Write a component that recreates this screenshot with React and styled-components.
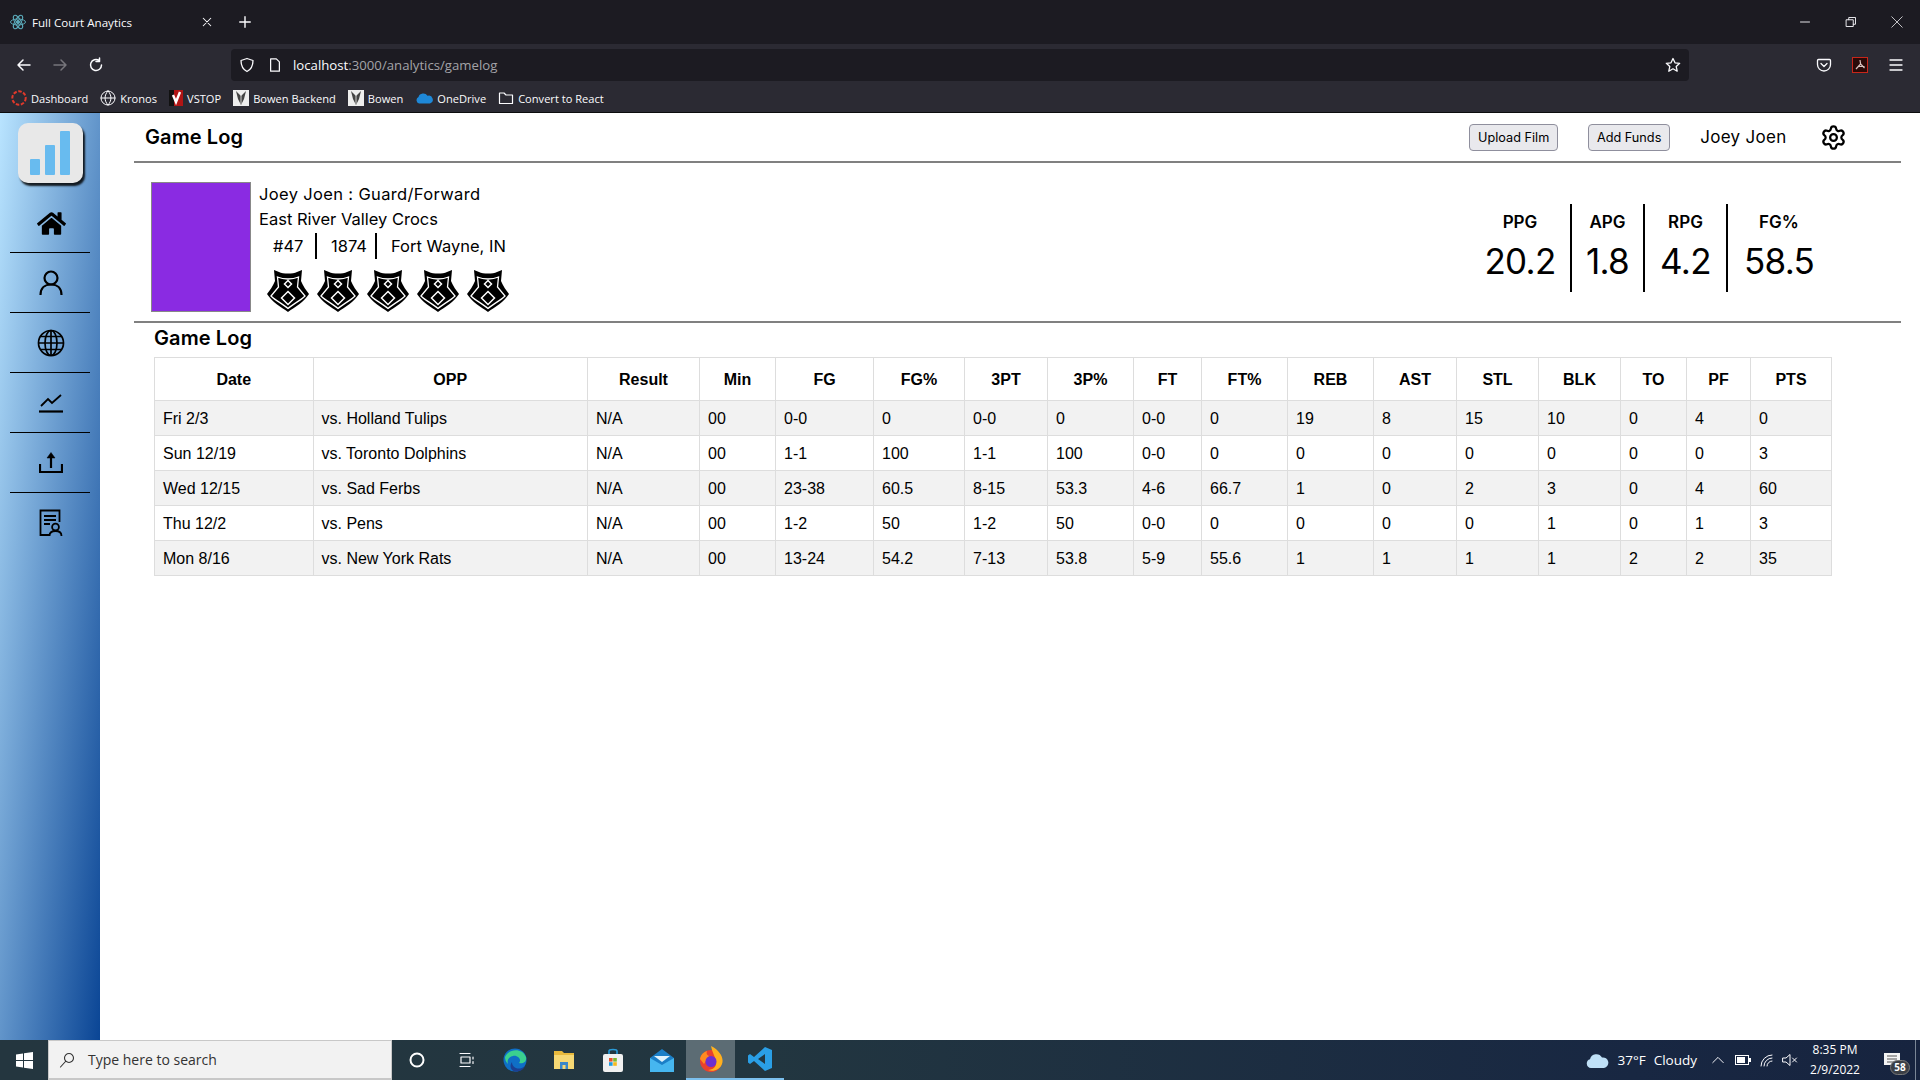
import React from "react";
import styled, { createGlobalStyle } from "styled-components";
import { FaHome } from "react-icons/fa";
import { Settings } from "lucide-react";

const GlobalStyle = createGlobalStyle`
   html, body {
      margin: 0;
      padding: 0;
      height: 100%;
      overflow: hidden;
      background: #fff;
   }
   #root {
      height: 100%;
   }
`;

const POP = `Inter, "Noto Sans", sans-serif`;
const UI = `"Open Sans", "Noto Sans", sans-serif`;

const Page = styled.div`
   width: 1920px;
   height: 1080px;
   display: flex;
   flex-direction: column;
`;

/* browser chrome */
const Chrome = styled.div`
   height: 113px;
   flex: none;
   background: #2b2a33;
   border-bottom: 1px solid #0c0c0d;
   box-sizing: border-box;
   font-family: ${UI};
   color: #fbfbfe;
`;

const TabStrip = styled.div`
   height: 44px;
   background: #1c1b22;
   display: flex;
   align-items: center;
`;

const Tab = styled.div`
   width: 226px;
   box-sizing: border-box;
   padding: 0 10px;
   display: flex;
   align-items: center;
   gap: 6px;
   font-size: 11.6px;
`;

const TabClose = styled.span`
   margin-left: auto;
   margin-right: 3px;
   display: flex;
`;

const NewTab = styled.span`
   width: 38px;
   display: flex;
   justify-content: center;
`;

const WinControls = styled.div`
   margin-left: auto;
   display: flex;
`;

const WinButton = styled.span`
   width: 46px;
   display: flex;
   justify-content: center;
`;

const ToolRow = styled.div`
   height: 42px;
   display: flex;
   align-items: center;
   padding-left: 6px;
   padding-right: 6px;
`;

const ToolSlot = styled.span`
   width: 36px;
   display: flex;
   justify-content: center;
   align-items: center;
`;

const UrlBar = styled.div`
   width: 1458px;
   height: 32px;
   margin-left: 117px;
   margin-right: 117px;
   background: #1c1b22;
   border-radius: 4px;
   display: flex;
   align-items: center;
   padding-left: 2px;
   box-sizing: border-box;
   flex: none;
   font-size: 13.2px;
   color: #a3a3a8;
`;

const UrlHost = styled.span`
   color: #fbfbfe;
`;

const UrlText = styled.span`
   margin-left: 4px;
`;

const UrlStar = styled.span`
   margin-left: auto;
   margin-right: 8px;
   display: flex;
`;

const UrlIcon = styled.span`
   width: 28px;
   display: flex;
   justify-content: center;
`;

const BookmarkRow = styled.div`
   height: 24px;
   display: flex;
   align-items: center;
   padding-left: 11px;
   gap: 12px;
   font-size: 11.1px;
`;

const Bookmark = styled.div`
   display: flex;
   align-items: center;
   gap: 4px;
`;

/* app */
const Body = styled.div`
   flex: 1;
   min-height: 0;
   display: flex;
   background: #fff;
`;

const Sidebar = styled.nav`
   width: 100px;
   flex: none;
   background: linear-gradient(to bottom right, #b9e4ff, #0a4595);
   display: flex;
   flex-direction: column;
   align-items: center;
   padding-top: 10px;
   box-sizing: border-box;
`;

const Logo = styled.div`
   width: 65px;
   height: 60px;
   background: #e8e8e8;
   border-radius: 10px;
   box-shadow: 2px 3px 2px rgba(0, 0, 0, 0.85);
   display: flex;
   align-items: flex-end;
   justify-content: center;
   gap: 5px;
   padding-bottom: 8px;
   box-sizing: border-box;
   margin-bottom: 10px;
`;

const LogoBar = styled.span`
   width: 10px;
   height: ${({ $h }) => $h}px;
   background: #68bbef;
   border-radius: 1px;
`;

const NavItem = styled.div`
   width: 80px;
   height: 60px;
   flex: none;
   box-sizing: border-box;
   display: flex;
   align-items: center;
   justify-content: center;
   padding-left: 2px;
   padding-top: ${({ $first }) => ($first ? 2 : 0)}px;
   border-bottom: ${({ $last }) => ($last ? "none" : "1px solid #000")};
   color: #000;
`;

const Main = styled.main`
   flex: 1;
   min-width: 0;
   padding: 0 19px 0 34px;
   color: #000;
   font-family: ${POP};
`;

const TopBar = styled.header`
   height: 50px;
   box-sizing: border-box;
   border-bottom: 2px solid #808080;
   display: flex;
   align-items: center;
   padding: 0 42px 0 11px;
`;

const TopTitle = styled.h1`
   margin: 0;
   font-size: 20px;
   font-weight: 600;
   letter-spacing: 0.1px;
`;

const TopButton = styled.button`
   height: 27px;
   width: ${({ $w }) => $w}px;
   margin-left: ${({ $ml }) => $ml}px;
   padding: 0;
   background: #e9e9ed;
   border: 1px solid #8f8f9d;
   border-radius: 4px;
   font-family: ${POP};
   font-size: 12.7px;
   color: #000;
`;

const UserName = styled.span`
   margin-left: 30px;
   width: 120px;
   font-size: 17px;
   letter-spacing: 0.3px;
`;

const Profile = styled.section`
   height: 160px;
   box-sizing: border-box;
   border-bottom: 2px solid #808080;
   display: flex;
   padding: 19px 71px 0 17px;
`;

const Photo = styled.div`
   width: 100px;
   height: 130px;
   box-sizing: border-box;
   background: #8a2be2;
   border: 1px solid #888;
   flex: none;
`;

const PlayerInfo = styled.div`
   margin-left: 8px;
   font-size: 16.5px;
`;

const PlayerLine = styled.div`
   height: 25px;
   line-height: 25px;
   letter-spacing: ${({ $track }) => $track || 0}px;
`;

const MetaRow = styled.div`
   display: flex;
   height: 26px;
   line-height: 26px;
   margin-top: 1px;
   padding-left: 14px;
`;

const MetaCell = styled.span`
   width: ${({ $w }) => $w}px;
   box-sizing: border-box;
   padding-left: ${({ $pad }) => $pad || 0}px;
   border-right: ${({ $line }) => ($line ? "2px solid #000" : "none")};
`;

const BadgeRow = styled.div`
   display: flex;
   gap: 8px;
   margin-top: 11px;
   padding-left: 8px;
`;

const StatRow = styled.div`
   margin-left: auto;
   margin-top: 22px;
   height: 88px;
   display: flex;
`;

const StatCell = styled.div`
   width: ${({ $w }) => $w}px;
   box-sizing: border-box;
   border-right: ${({ $line }) => ($line ? "2px solid #000" : "none")};
   text-align: center;
`;

const StatLabel = styled.div`
   margin-top: 7px;
   font-size: 17px;
   font-weight: 600;
   line-height: 22px;
`;

const StatValue = styled.div`
   margin-top: 6px;
   font-size: 35px;
   line-height: 44px;
   letter-spacing: -0.7px;
`;

const SectionTitle = styled.h2`
   margin: 0;
   padding-left: 20px;
   height: 34px;
   line-height: 30px;
   font-size: 20px;
   font-weight: 600;
   letter-spacing: 0.1px;
`;

const TableWrap = styled.div`
   padding-left: 20px;
`;

const LogTable = styled.table`
   width: 1677px;
   table-layout: fixed;
   border-collapse: collapse;
   font-family: "Liberation Sans", Arial, sans-serif;
   font-size: 16px;
`;

const Th = styled.th`
   height: 43px;
   padding: 2px 0 0;
   box-sizing: border-box;
   border: 1px solid #ddd;
   font-weight: 700;
   text-align: center;
   background: #fff;
`;

const Tr = styled.tr`
   background: ${({ $odd }) => ($odd ? "#f2f2f2" : "#fff")};
`;

const Td = styled.td`
   height: 35px;
   padding: 2px 0 0 8px;
   box-sizing: border-box;
   border: 1px solid #ddd;
   white-space: nowrap;
`;

/* taskbar */
const Taskbar = styled.footer`
   height: 40px;
   flex: none;
   display: flex;
   align-items: stretch;
   background: linear-gradient(to right, #24363f, #223640 40%, #182742 85%, #17243f);
   color: #fff;
   font-family: ${UI};
`;

const StartSlot = styled.div`
   width: 48px;
   display: flex;
   align-items: center;
   justify-content: center;
`;

const SearchBox = styled.div`
   width: 344px;
   box-sizing: border-box;
   background: #f2f2f2;
   border: 1px solid #c8c8c8;
   border-bottom-width: 2px;
   display: flex;
   align-items: center;
   gap: 13px;
   padding-left: 10px;
   color: #333;
   font-size: 14px;
`;

const TaskSlot = styled.div`
   width: 49px;
   box-sizing: border-box;
   display: flex;
   align-items: center;
   justify-content: center;
   background: ${({ $active }) => ($active ? "#5c6c74" : "transparent")};
   border-bottom: ${({ $open }) => ($open ? "2px solid #7cc0ee" : "none")};
`;

const Tray = styled.div`
   margin-left: auto;
   display: flex;
   align-items: center;
   font-size: 13.5px;
   border-right: 1px solid #7a8696;
   margin-right: 4px;
`;

const TrayIcon = styled.span`
   width: ${({ $w }) => $w}px;
   margin-left: ${({ $ml }) => $ml || 0}px;
   display: flex;
   justify-content: center;
`;

const TrayText = styled.span`
   margin-left: ${({ $ml }) => $ml}px;
`;

const Clock = styled.div`
   width: 66px;
   margin-left: 1px;
   text-align: center;
   font-size: 12px;
   line-height: 20px;
`;

const Notify = styled.div`
   position: relative;
   width: 37px;
   height: 40px;
   margin-left: 10px;
   padding: 13px 0 0 6px;
   box-sizing: border-box;
`;

const NotifyCount = styled.span`
   position: absolute;
   left: 12px;
   top: 20px;
   width: 20px;
   height: 15px;
   border-radius: 8px;
   background: #3b3f46;
   border: 1px solid #777;
   box-sizing: border-box;
   font-size: 10px;
   line-height: 13px;
   text-align: center;
   font-weight: 700;
`;

/* icons */
const ReactMark = () => (
   <svg width="16" height="16" viewBox="0 0 16 16" fill="none" stroke="#5aa9b8" strokeWidth="1">
      <circle cx="8" cy="8" r="1.6" fill="#5aa9b8" />
      <ellipse cx="8" cy="8" rx="7.5" ry="3" />
      <ellipse cx="8" cy="8" rx="7.5" ry="3" transform="rotate(60 8 8)" />
      <ellipse cx="8" cy="8" rx="7.5" ry="3" transform="rotate(120 8 8)" />
   </svg>
);

const Line = ({ w = 16, h = 16, d, sw = 1.5, color = "#fbfbfe", fill = "none" }) => (
   <svg width={w} height={h} viewBox="0 0 16 16" fill={fill} stroke={color} strokeWidth={sw} strokeLinecap="round" strokeLinejoin="round">
      <path d={d} />
   </svg>
);

const PdfIcon = () => (
   <svg width="16" height="16" viewBox="0 0 16 16">
      <rect x="0.5" y="0.5" width="15" height="15" fill="#2a0a08" stroke="#c8261a" />
      <path d="M8 3 L8.6 7 L12.5 11 M8.6 7 L4 12 M6.5 9.5 L12.5 9.5" fill="none" stroke="#d9c4c0" strokeWidth="1.2" />
   </svg>
);

const Dashboard = () => (
   <svg width="16" height="16" viewBox="0 0 16 16">
      <circle cx="8" cy="8" r="6.7" fill="none" stroke="#e0392b" strokeWidth="2" strokeDasharray="3.5 1.6" />
   </svg>
);

const Vstop = () => (
   <svg width="14" height="16" viewBox="0 0 14 16">
      <rect width="14" height="16" fill="#b01515" />
      <rect width="5" height="16" fill="#111" />
      <path d="M4 5 L7 12 L11 2" fill="none" stroke="#fff" strokeWidth="2.4" />
   </svg>
);

const Bowen = () => (
   <svg width="16" height="16" viewBox="0 0 16 16">
      <rect width="16" height="16" fill="#eee" />
      <path d="M3 1 L8 6 L13 1 L11 9 L8 15 L5 9 Z" fill="#444" />
      <path d="M8 5 V14" stroke="#ccc" />
   </svg>
);

const OneDrive = () => (
   <svg width="18" height="12" viewBox="0 0 18 12">
      <path d="M4 11.5 A3.5 3.5 0 0 1 3.5 5 A5 5 0 0 1 12.5 3.8 A4 4 0 0 1 15 11.5 Z" fill="#1e88d8" />
   </svg>
);

const Shield = () => (
   <svg width="42" height="42" viewBox="0 0 42 42">
      <path d="M7 0 L12 2 C16 4 26 4 30 2 L35 0 L34 11 C36 16 39 20 42 24 C37 32 28 37 21 42 C14 37 5 32 0 24 C3 20 6 16 8 11 Z" fill="#000" />
      <path d="M10.5 7 C14 8.5 16 9 21 9 C26 9 28 8.5 31.5 7 L30.5 17 L38 26 C33 31 26 34 21 38.5 C16 34 9 31 4 26 L11.5 17 Z" fill="none" stroke="#fff" strokeWidth="1.3" />
      <path d="M21 10.5 L24.5 14 L21 17.5 L17.5 14 Z" fill="none" stroke="#fff" strokeWidth="1.5" />
      <path d="M21 21.5 L27.5 28 L21 34.5 L14.5 28 Z" fill="none" stroke="#fff" strokeWidth="1.5" />
   </svg>
);

const UserIcon = () => (
   <svg width="24" height="26" viewBox="0 0 24 26" fill="none" stroke="#000" strokeWidth="2.2">
      <circle cx="12" cy="8" r="6.5" />
      <path d="M1.5 25 C1.5 18 6 14.5 12 14.5 C18 14.5 22.5 18 22.5 25" />
   </svg>
);

const GlobeIcon = () => (
   <svg width="28" height="28" viewBox="0 0 28 28" fill="none" stroke="#000" strokeWidth="1.7">
      <circle cx="14" cy="14" r="12.5" />
      <ellipse cx="14" cy="14" rx="6" ry="12.5" />
      <path d="M14 1.5 V26.5 M1.5 14 H26.5 M3.5 7.5 H24.5 M3.5 20.5 H24.5" />
   </svg>
);

const TrendIcon = () => (
   <svg width="26" height="22" viewBox="0 0 26 22" fill="none" stroke="#000">
      <path d="M3 14 L10 7 L14 11 L23 3" strokeWidth="1.8" />
      <path d="M1 19.5 H25" strokeWidth="2.2" />
   </svg>
);

const UploadIcon = () => (
   <svg width="24" height="22" viewBox="0 0 24 22" fill="none" stroke="#000" strokeWidth="2.2">
      <path d="M1 12 V20 H23 V12" />
      <path d="M12 16 V3" />
      <path d="M12 0.5 L16 6 H8 Z" fill="#000" strokeWidth="0.5" />
   </svg>
);

const ReportIcon = () => (
   <svg width="24" height="28" viewBox="0 0 24 28" fill="none" stroke="#000" strokeWidth="1.8">
      <path d="M10 26 H1.5 V1.5 H20.5 V13" />
      <path d="M5 7 H17 M5 11 H17 M5 15 H11" />
      <circle cx="16.5" cy="18" r="3.4" />
      <path d="M10.5 27 C10.5 23.5 13 22 16.5 22 C20 22 22.5 23.5 22.5 27" />
   </svg>
);

const WinLogo = () => (
   <svg width="17" height="17" viewBox="0 0 17 17" fill="#fff">
      <path d="M0 2.4 L7 1.4 V8 H0 Z M8 1.2 L17 0 V8 H8 Z M0 9 H7 V15.6 L0 14.6 Z M8 9 H17 V17 L8 15.8 Z" />
   </svg>
);

const Edge = () => (
   <svg width="24" height="24" viewBox="0 0 24 24">
      <circle cx="12" cy="12" r="11.5" fill="#0f6fc6" />
      <path d="M2 9 C5 1 19 -1 23 9 C24 14 20 16 16 15 C19 12 15 7 10 8 C5 9 4 13 5 16 C3 14 2 12 2 9 Z" fill="#3bd08f" />
      <path d="M9 14 C9 20 16 23 22 18 C20 23 14 24 12 23.5 C8 23 6 18 9 14 Z" fill="#1b3f92" />
   </svg>
);

const Explorer = () => (
   <svg width="22" height="22" viewBox="0 0 22 22">
      <path d="M1 2 H9 L11 4 H21 V20 H1 Z" fill="#e8b93c" />
      <rect x="1" y="6" width="20" height="14" fill="#f6d874" />
      <path d="M7 20 V13 H15 V20 Z" fill="#3a87c8" />
      <rect x="9.5" y="16" width="3" height="4" fill="#f6d874" />
   </svg>
);

const Store = () => (
   <svg width="22" height="24" viewBox="0 0 22 24">
      <path d="M7 6 V3 C7 1 15 1 15 3 V6" fill="none" stroke="#2a9bd8" strokeWidth="1.6" />
      <rect x="1" y="6" width="20" height="18" rx="2" fill="#f1f1f1" />
      <rect x="7" y="10" width="3.6" height="3.6" fill="#e8502b" />
      <rect x="11.2" y="10" width="3.6" height="3.6" fill="#7cb82f" />
      <rect x="7" y="14.2" width="3.6" height="3.6" fill="#1f9be0" />
      <rect x="11.2" y="14.2" width="3.6" height="3.6" fill="#f6b91e" />
   </svg>
);

const Mail = () => (
   <svg width="24" height="24" viewBox="0 0 24 24">
      <path d="M0 10 L12 1 L24 10 V24 H0 Z" fill="#1b7fc7" />
      <path d="M0 10 L12 17 L24 10 V24 H0 Z" fill="#46b6ef" />
      <path d="M4 8 H20 L12 14 Z" fill="#dff3fd" />
   </svg>
);

const Firefox = () => (
   <svg width="24" height="26" viewBox="0 0 24 26">
      <circle cx="12" cy="15" r="11" fill="#e8412e" />
      <path d="M12 0 C22 5 25 13 23 18 C21 24 14 26 9 24 C15 24 18 20 17 15 C16 10 13 6 12 0 Z" fill="#ffb01f" />
      <path d="M1 13 C2 8 5 6 8 5 C7 8 8 9 10 10 L5 18 Z" fill="#ff8a20" />
      <circle cx="12" cy="15.5" r="5.5" fill="#6e2fd0" />
   </svg>
);

const VsCode = () => (
   <svg width="24" height="24" viewBox="0 0 24 24">
      <path d="M17 0 L24 3 V21 L17 24 L6 14 L2 17 L0 15.5 V8.5 L2 7 L6 10 Z M17 7 L10 12 L17 17 Z" fill="#2a9fe6" fillRule="evenodd" />
   </svg>
);

const Cloud = () => (
   <svg width="23" height="16" viewBox="0 0 23 16">
      <path d="M5 16 A4.5 4.5 0 0 1 4 7.2 A6.5 6.5 0 0 1 16 5.5 A5.3 5.3 0 0 1 18 16 Z" fill="#bfe0f7" />
   </svg>
);

const Battery = () => (
   <svg width="16" height="10" viewBox="0 0 16 10">
      <rect x="0.5" y="0.5" width="13" height="9" fill="none" stroke="#fff" />
      <rect x="2" y="2" width="8" height="6" fill="#fff" />
      <rect x="14" y="3" width="2" height="4" fill="#fff" />
   </svg>
);

const NotifyIcon = () => (
   <svg width="16" height="12" viewBox="0 0 16 12" display="block">
      <path d="M0 0 H16 V12 H0 Z" fill="#f4f4f4" />
      <path d="M3 3 H13 M3 6 H13 M3 9 H10" stroke="#555" strokeWidth="1" />
   </svg>
);

const HEADERS = [
   ["Date", 158.5],
   ["OPP", 274.5],
   ["Result", 112],
   ["Min", 76],
   ["FG", 98],
   ["FG%", 91],
   ["3PT", 83],
   ["3P%", 86],
   ["FT", 68],
   ["FT%", 86],
   ["REB", 86],
   ["AST", 83],
   ["STL", 82],
   ["BLK", 82],
   ["TO", 66],
   ["PF", 64],
   ["PTS", 81],
];

const GAMES = [
   ["Fri 2/3", "vs. Holland Tulips", "N/A", "00", "0-0", "0", "0-0", "0", "0-0", "0", "19", "8", "15", "10", "0", "4", "0"],
   ["Sun 12/19", "vs. Toronto Dolphins", "N/A", "00", "1-1", "100", "1-1", "100", "0-0", "0", "0", "0", "0", "0", "0", "0", "3"],
   ["Wed 12/15", "vs. Sad Ferbs", "N/A", "00", "23-38", "60.5", "8-15", "53.3", "4-6", "66.7", "1", "0", "2", "3", "0", "4", "60"],
   ["Thu 12/2", "vs. Pens", "N/A", "00", "1-2", "50", "1-2", "50", "0-0", "0", "0", "0", "0", "1", "0", "1", "3"],
   ["Mon 8/16", "vs. New York Rats", "N/A", "00", "13-24", "54.2", "7-13", "53.8", "5-9", "55.6", "1", "1", "1", "1", "2", "2", "35"],
];

const STATS = [
   ["PPG", "20.2", 102, true],
   ["APG", "1.8", 73, true],
   ["RPG", "4.2", 83, true],
   ["FG%", "58.5", 102, false],
];

const App = () => {
   return (
      <Page>
         <GlobalStyle />
         <Chrome>
            <TabStrip>
               <Tab>
                  <ReactMark />
                  <span>Full Court Anaytics</span>
                  <TabClose>
                     <Line w={12} h={12} d="M3 3 L13 13 M13 3 L3 13" sw={1.4} />
                  </TabClose>
               </Tab>
               <NewTab>
                  <Line w={14} h={14} d="M8 2 V14 M2 8 H14" sw={1.6} />
               </NewTab>
               <WinControls>
                  <WinButton>
                     <Line w={12} h={12} d="M2 8 H14" sw={1.2} />
                  </WinButton>
                  <WinButton>
                     <Line w={12} h={12} d="M2 5 H11 V14 H2 Z M5 5 V2 H14 V11 H11" sw={1.2} />
                  </WinButton>
                  <WinButton>
                     <Line w={12} h={12} d="M1 1 L15 15 M15 1 L1 15" sw={1} />
                  </WinButton>
               </WinControls>
            </TabStrip>
            <ToolRow>
               <ToolSlot>
                  <Line d="M14 8 H2 M7 3 L2 8 L7 13" />
               </ToolSlot>
               <ToolSlot>
                  <Line d="M2 8 H14 M9 3 L14 8 L9 13" color="#77767c" />
               </ToolSlot>
               <ToolSlot>
                  <Line d="M13.5 8 A5.5 5.5 0 1 1 11 3.4 M11.5 1 V4.5 H8" />
               </ToolSlot>
               <UrlBar>
                  <UrlIcon>
                     <Line d="M8 1.5 L14 3.5 C14 9 12 12.5 8 14.5 C4 12.5 2 9 2 3.5 Z" sw={1.3} />
                  </UrlIcon>
                  <UrlIcon>
                     <Line w={14} h={14} d="M3 1 H9.5 L13 4.5 V15 H3 Z" sw={1.4} />
                  </UrlIcon>
                  <UrlText>
                     <UrlHost>localhost</UrlHost>:3000/analytics/gamelog
                  </UrlText>
                  <UrlStar>
                     <Line d="M8 1.5 L10 5.8 L14.7 6.3 L11.2 9.5 L12.2 14.2 L8 11.8 L3.8 14.2 L4.8 9.5 L1.3 6.3 L6 5.8 Z" sw={1.3} />
                  </UrlStar>
               </UrlBar>
               <ToolSlot>
                  <Line d="M2.5 2.5 H13.5 Q14.5 2.5 14.5 3.5 V7.5 A6.5 6.5 0 0 1 1.5 7.5 V3.5 Q1.5 2.5 2.5 2.5 Z M5 6.5 L8 9.5 L11 6.5" sw={1.3} />
               </ToolSlot>
               <ToolSlot>
                  <PdfIcon />
               </ToolSlot>
               <ToolSlot>
                  <Line d="M2 3 H14 M2 8 H14 M2 13 H14" sw={1.3} />
               </ToolSlot>
            </ToolRow>
            <BookmarkRow>
               <Bookmark>
                  <Dashboard />
                  Dashboard
               </Bookmark>
               <Bookmark>
                  <Line d="M8 1 A7 7 0 1 0 8 15 A7 7 0 1 0 8 1 M1 8 H15 M8 1 C4 5 4 11 8 15 M8 1 C12 5 12 11 8 15" sw={1} />
                  Kronos
               </Bookmark>
               <Bookmark>
                  <Vstop />
                  VSTOP
               </Bookmark>
               <Bookmark>
                  <Bowen />
                  Bowen Backend
               </Bookmark>
               <Bookmark>
                  <Bowen />
                  Bowen
               </Bookmark>
               <Bookmark>
                  <OneDrive />
                  OneDrive
               </Bookmark>
               <Bookmark>
                  <Line d="M1.5 3 H6 L8 5 H14.5 V13.5 H1.5 Z" sw={1.2} />
                  Convert to React
               </Bookmark>
            </BookmarkRow>
         </Chrome>

         <Body>
            <Sidebar>
               <Logo>
                  <LogoBar $h={16} />
                  <LogoBar $h={30} />
                  <LogoBar $h={44} />
               </Logo>
               <NavItem $first>
                  <FaHome size={29} />
               </NavItem>
               <NavItem>
                  <UserIcon />
               </NavItem>
               <NavItem>
                  <GlobeIcon />
               </NavItem>
               <NavItem>
                  <TrendIcon />
               </NavItem>
               <NavItem>
                  <UploadIcon />
               </NavItem>
               <NavItem $last>
                  <ReportIcon />
               </NavItem>
            </Sidebar>

            <Main>
               <TopBar>
                  <TopTitle>Game Log</TopTitle>
                  <TopButton $w={89} $ml={1226}>Upload Film</TopButton>
                  <TopButton $w={82} $ml={30}>Add Funds</TopButton>
                  <UserName>Joey Joen</UserName>
                  <Settings size={27} strokeWidth={2} />
               </TopBar>

               <Profile>
                  <Photo />
                  <PlayerInfo>
                     <PlayerLine $track={0.35}>Joey Joen : Guard/Forward</PlayerLine>
                     <PlayerLine>East River Valley Crocs</PlayerLine>
                     <MetaRow>
                        <MetaCell $w={44} $line>#47</MetaCell>
                        <MetaCell $w={60} $pad={14} $line>1874</MetaCell>
                        <MetaCell $w={140} $pad={14}>Fort Wayne, IN</MetaCell>
                     </MetaRow>
                     <BadgeRow>
                        <Shield />
                        <Shield />
                        <Shield />
                        <Shield />
                        <Shield />
                     </BadgeRow>
                  </PlayerInfo>
                  <StatRow>
                     {STATS.map(([label, value, w, line]) => (
                        <StatCell key={label} $w={w} $line={line}>
                           <StatLabel>{label}</StatLabel>
                           <StatValue>{value}</StatValue>
                        </StatCell>
                     ))}
                  </StatRow>
               </Profile>

               <SectionTitle>Game Log</SectionTitle>
               <TableWrap>
                  <LogTable>
                     <colgroup>
                        {HEADERS.map(([name, w]) => (
                           <col key={name} width={w} />
                        ))}
                     </colgroup>
                     <thead>
                        <tr>
                           {HEADERS.map(([name]) => (
                              <Th key={name}>{name}</Th>
                           ))}
                        </tr>
                     </thead>
                     <tbody>
                        {GAMES.map((game, i) => (
                           <Tr key={game[0]} $odd={i % 2 === 0}>
                              {game.map((cell, j) => (
                                 <Td key={j}>{cell}</Td>
                              ))}
                           </Tr>
                        ))}
                     </tbody>
                  </LogTable>
               </TableWrap>
            </Main>
         </Body>

         <Taskbar>
            <StartSlot>
               <WinLogo />
            </StartSlot>
            <SearchBox>
               <Line d="M10 1.5 A4.5 4.5 0 1 0 10 10.5 A4.5 4.5 0 1 0 10 1.5 M6.5 9.5 L1.5 15" color="#333" sw={1.1} />
               Type here to search
            </SearchBox>
            <TaskSlot>
               <svg width="16" height="16" viewBox="0 0 16 16" fill="none" stroke="#fff" strokeWidth="2">
                  <circle cx="8" cy="8" r="6.5" />
               </svg>
            </TaskSlot>
            <TaskSlot>
               <Line d="M2 1.5 H12 M2 14.5 H12 M3 5 H12 V11 H3 Z M15 5 V7 M15 9.5 V11.5" sw={1.2} />
            </TaskSlot>
            <TaskSlot><Edge /></TaskSlot>
            <TaskSlot><Explorer /></TaskSlot>
            <TaskSlot><Store /></TaskSlot>
            <TaskSlot><Mail /></TaskSlot>
            <TaskSlot $active $open><Firefox /></TaskSlot>
            <TaskSlot $open><VsCode /></TaskSlot>
            <Tray>
               <Cloud />
               <TrayText $ml={8}>37°F</TrayText>
               <TrayText $ml={8}>Cloudy</TrayText>
               <TrayIcon $w={26} $ml={8}>
                  <Line w={14} h={14} d="M2 11 L8 5 L14 11" sw={1.1} />
               </TrayIcon>
               <TrayIcon $w={24}>
                  <Battery />
               </TrayIcon>
               <TrayIcon $w={24}>
                  <Line w={16} h={16} d="M2 14 A11 11 0 0 1 13 3 M5 14 A8 8 0 0 1 13 6 M8 14 A5 5 0 0 1 13 9" sw={1} />
               </TrayIcon>
               <TrayIcon $w={22}>
                  <Line w={16} h={16} d="M1 6 H4 L8 2.5 V13.5 L4 10 H1 Z M10.5 6 L14.5 10 M14.5 6 L10.5 10" sw={1} />
               </TrayIcon>
               <Clock>
                  8:35 PM
                  <br />
                  2/9/2022
               </Clock>
               <Notify>
                  <NotifyIcon />
                  <NotifyCount>58</NotifyCount>
               </Notify>
            </Tray>
         </Taskbar>
      </Page>
   );
};

export default App;
